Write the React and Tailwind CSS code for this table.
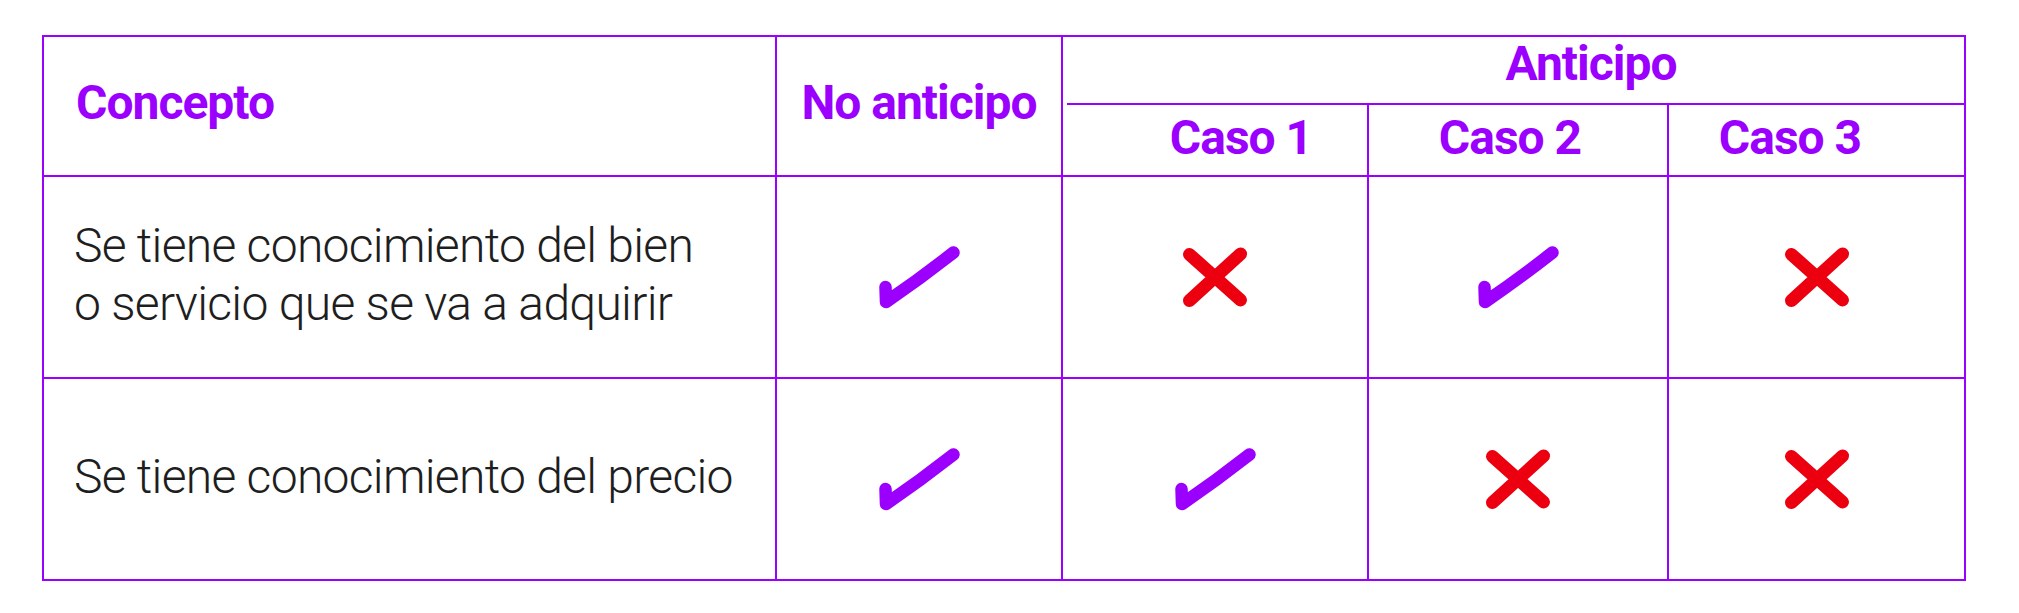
import React from "react";

function Check() {
  return (
    <svg width="80" height="62" viewBox="0 0 80 62" overflow="visible" aria-hidden="true">
      <path
        d="M6.5 41 L7 56 Q 42 32 74.5 6.5"
        fill="none"
        stroke="#9b00ff"
        strokeWidth="12.5"
        strokeLinecap="round"
        strokeLinejoin="round"
      />
    </svg>
  );
}

function Cross() {
  return (
    <svg width="66" height="60" viewBox="0 0 66 60" overflow="visible" aria-hidden="true">
      <path
        d="M7.5 7.5 L58.5 53 M58.5 7 L7.5 53.5"
        fill="none"
        stroke="#ec000f"
        strokeWidth="13"
        strokeLinecap="round"
      />
    </svg>
  );
}

function IconCell({ ok }) {
  return (
    <div className="border-l-2 border-t-2 border-[#9b00ff] flex items-center justify-center">
      {ok ? <Check /> : <Cross />}
    </div>
  );
}

export default function App() {
  const head = "font-bold text-[48px] leading-none tracking-[-1px] text-[#9b00ff]";
  const body = "font-light text-[48px] leading-[58px] tracking-[-0.7px] text-[#1e1e1e]";
  return (
    <div
      className="bg-white w-[2019px] h-[613px] pl-[42px] pt-[35px]"
      style={{ fontFamily: "Roboto, 'Noto Sans', sans-serif" }}
    >
      <div className="grid w-[1924px] grid-cols-[733px_286px_306px_300px_297px] grid-rows-[70px_70px_202px_202px] border-r-2 border-b-2 border-[#9b00ff]">
        <div className="row-span-2 border-l-2 border-t-2 border-[#9b00ff] flex items-center pl-[32px] pb-[6px]">
          <span className={head}>Concepto</span>
        </div>
        <div className="row-span-2 border-l-2 border-t-2 border-[#9b00ff] flex items-center justify-center pb-[6px]">
          <span className={head}>No anticipo</span>
        </div>
        <div className="col-span-3 border-l-2 border-t-2 border-[#9b00ff] flex flex-col">
          <div className="flex-1 flex items-center justify-center pl-[155px] pb-[12px]">
            <span className={head}>Anticipo</span>
          </div>
          <div className="h-[2px] ml-[4px] bg-[#9b00ff]" />
        </div>
        <div className="border-l-2 border-[#9b00ff] flex items-center justify-center pl-[52px] pb-[5px]">
          <span className={head}>Caso 1</span>
        </div>
        <div className="border-l-2 border-[#9b00ff] flex items-center justify-center pr-[16px] pb-[5px]">
          <span className={head}>Caso 2</span>
        </div>
        <div className="border-l-2 border-[#9b00ff] flex items-center justify-center pr-[53px] pb-[5px]">
          <span className={head}>Caso 3</span>
        </div>

        <div className="border-l-2 border-t-2 border-[#9b00ff] flex items-center pl-[30px] pb-[4px]">
          <p className={body}>
            Se tiene conocimiento del bien
            <br />
            o servicio que se va a adquirir
          </p>
        </div>
        <IconCell ok />
        <IconCell ok={false} />
        <IconCell ok />
        <IconCell ok={false} />

        <div className="border-l-2 border-t-2 border-[#9b00ff] flex items-center pl-[30px] pb-[5px]">
          <p className={body}>Se tiene conocimiento del precio</p>
        </div>
        <IconCell ok />
        <IconCell ok />
        <IconCell ok={false} />
        <IconCell ok={false} />
      </div>
    </div>
  );
}
